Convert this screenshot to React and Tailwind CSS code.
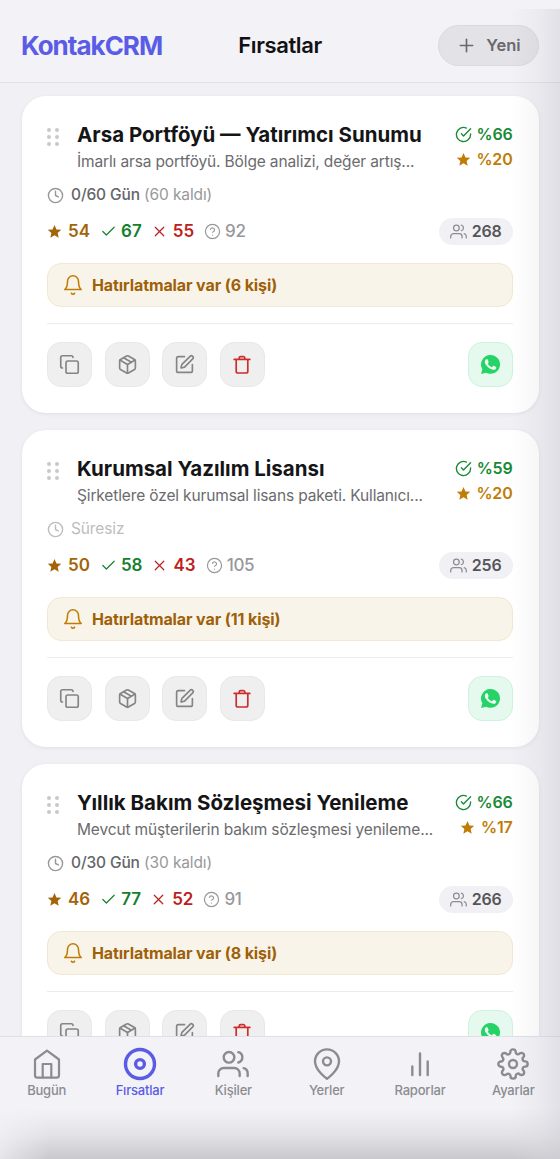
import { clsx } from 'clsx';
import { Check, CircleHelp, Clock, Copy, Plus, SquarePen, X } from 'lucide-react';
import { FiBell, FiCheckCircle, FiMapPin, FiPackage, FiSettings, FiUsers } from 'react-icons/fi';

const deals = [
    {
        title: 'Arsa Portföyü — Yatırımcı Sunumu',
        desc: 'İmarlı arsa portföyü. Bölge analizi, değer artış...',
        days: '0/60 Gün',
        left: '(60 kaldı)',
        success: '%66',
        star: '%20',
        stats: [54, 67, 55, 92],
        people: 268,
        reminders: 6,
    },
    {
        title: 'Kurumsal Yazılım Lisansı',
        desc: 'Şirketlere özel kurumsal lisans paketi. Kullanıcı...',
        success: '%59',
        star: '%20',
        stats: [50, 58, 43, 105],
        people: 256,
        reminders: 11,
    },
    {
        title: 'Yıllık Bakım Sözleşmesi Yenileme',
        desc: 'Mevcut müşterilerin bakım sözleşmesi yenileme...',
        days: '0/30 Gün',
        left: '(30 kaldı)',
        success: '%66',
        star: '%17',
        stats: [46, 77, 52, 91],
        people: 266,
        reminders: 8,
    },
];

function StarIcon({ size }) {
    return (
        <svg width={size} height={size} viewBox="0 0 24 24" fill="currentColor">
            <path d="M12 1.5l3.1 7.1 7.7.7-5.8 5.1 1.7 7.6-6.7-4-6.7 4L7 14.4 1.2 9.3l7.7-.7z" />
        </svg>
    );
}

function TrashIcon() {
    return (
        <svg width="18" height="20" viewBox="0 0 18 20" fill="none" stroke="currentColor" strokeWidth="1.7" strokeLinecap="round" strokeLinejoin="round">
            <path d="M1.2 4.4h15.6M3.2 4.4v11.8a1.8 1.8 0 0 0 1.8 1.8h8a1.8 1.8 0 0 0 1.8-1.8V4.4M6.2 4.2V3a1.400 1.400 0 0 1 1.400-1.400h2.800A1.400 1.400 0 0 1 11.800 3v1.200" />
        </svg>
    );
}

function WhatsappIcon() {
    return (
        <svg width="19" height="19" viewBox="0 0 24 24">
            <path fill="#25d366" d="M12 0a11.900 11.900 0 0 0-10.300 17.900L.1 23.900l6.200-1.600A11.900 11.900 0 1 0 12 0z" />
            <path
                fill="#effcf4"
                transform="translate(-2.300 -2.300) scale(1.190)"
                d="M17.472 14.382c-.297-.149-1.758-.867-2.030-.967-.273-.099-.471-.148-.670.150-.197.297-.767.966-.940 1.164-.173.199-.347.223-.644.075-.297-.150-1.255-.463-2.390-1.475-.883-.788-1.480-1.761-1.653-2.059-.173-.297-.018-.458.130-.606.134-.133.298-.347.446-.520.149-.174.198-.298.298-.497.099-.198.050-.371-.025-.520-.075-.149-.669-1.612-.916-2.207-.242-.579-.487-.500-.669-.510-.173-.008-.371-.010-.570-.010-.198 0-.520.074-.792.372-.272.297-1.040 1.016-1.040 2.479 0 1.462 1.065 2.875 1.213 3.074.149.198 2.096 3.200 5.077 4.487.709.306 1.262.489 1.694.625.712.227 1.360.195 1.871.118.571-.085 1.758-.719 2.006-1.413.248-.694.248-1.289.173-1.413-.074-.124-.272-.198-.570-.347z"
            />
        </svg>
    );
}

function HomeIcon() {
    return (
        <svg width="32" height="32" viewBox="0 0 32 32" fill="none" stroke="currentColor" strokeWidth="2.2" strokeLinecap="round" strokeLinejoin="round">
            <path d="M4 11.500 16 2.600l12 8.900v15.700a2.400 2.400 0 0 1-2.400 2.400H6.400A2.400 2.400 0 0 1 4 27.200z" />
            <path d="M11.700 29.400V16h8.600v13.400" />
        </svg>
    );
}

function TargetIcon() {
    return (
        <svg width="34" height="34" viewBox="0 0 34 34" fill="none" stroke="currentColor" strokeWidth="3.4">
            <circle cx="17" cy="17" r="14.5" />
            <circle cx="17" cy="17" r="4.4" />
        </svg>
    );
}

function BarsIcon() {
    return (
        <svg width="32" height="32" viewBox="0 0 32 32" fill="none" stroke="currentColor" strokeWidth="2.4" strokeLinecap="round">
            <path d="M8.300 18.500v8.500M16 5.500V27M23.700 13.500V27" />
        </svg>
    );
}

function GripDots() {
    return (
        <div className="mt-[6px] grid h-[18px] w-[12px] shrink-0 grid-cols-2 content-between gap-x-[4px]">
            {[0, 1, 2, 3, 4, 5].map((i) => (
                <span key={i} className="size-1 rounded-full bg-[#c9c9cc]" />
            ))}
        </div>
    );
}

function ActionButton({ className, children }) {
    return (
        <button className={clsx('flex size-[45px] items-center justify-center rounded-[14px] border', className || 'border-[#e8e8e9] bg-[#efefef] text-[#858587]')}>
            {children}
        </button>
    );
}

function DealCard({ deal }) {
    const [starred, won, lost, unknown] = deal.stats;

    return (
        <article className="h-[317px] shrink-0 rounded-[24px] bg-white pt-[26px] pr-[26px] pl-[25.5px] shadow-[0_1px_4px_rgba(0,0,0,0.07)]">
            <div className="flex h-[56px]">
                <GripDots />
                <div className="ml-[18px] min-w-0 flex-1 whitespace-nowrap">
                    <h2 className="text-[20.5px] leading-[26px] font-bold text-[#151517]">{deal.title}</h2>
                    <p className="text-[15.5px] leading-[28px] tracking-[-0.14px] text-[#6b6b6e]">{deal.desc}</p>
                </div>
                <div className="flex shrink-0 flex-col items-end text-[16px] leading-[25px] font-semibold tracking-[-0.2px]">
                    <span className="flex items-center gap-[5px] text-[#178a35]">
                        <FiCheckCircle size={17} strokeWidth={1.9} />
                        {deal.success}
                    </span>
                    <span className="flex items-center gap-[6px] text-[#c07c05]">
                        <StarIcon size={15} />
                        {deal.star}
                    </span>
                </div>
            </div>

            <div className={clsx('flex h-[34px] items-center gap-[7px] text-[15.5px] tracking-[-0.13px]', deal.days ? 'text-[#98989b]' : 'text-[#bdbdc0]')}>
                <Clock size={17} strokeWidth={2} />
                {deal.days ? (
                    <span><span className="font-medium text-[#656568]">{deal.days}</span> {deal.left}</span>
                ) : (
                    <span>Süresiz</span>
                )}
            </div>

            <div className="flex h-[38px] items-center text-[17px] font-semibold">
                <div className="flex items-center gap-[6px] pt-px text-[#a46306]"><StarIcon size={15} />{starred}</div>
                <div className="ml-[10px] flex items-center gap-[4px] pt-px text-[#16802e]"><Check size={17} strokeWidth={1.7} />{won}</div>
                <div className="ml-[9px] flex items-center gap-[5px] pt-px text-[#bd2020]"><X size={17} strokeWidth={1.7} />{lost}</div>
                <div className="ml-[10px] flex items-center gap-[4px] pt-px font-medium tracking-[-0.3px] text-[#98989b]"><CircleHelp size={17} strokeWidth={1.7} />{unknown}</div>
                <div className="ml-auto flex h-[27px] items-center gap-[5px] rounded-full bg-[#f1f1f5] px-[11px] text-[16px] tracking-[-0.2px] text-[#555558]">
                    <FiUsers size={17} strokeWidth={1.8} className="text-[#8e8e92]" />
                    {deal.people}
                </div>
            </div>

            <div className="mt-[13px] flex h-[44px] items-center gap-[8px] rounded-[14px] border border-[#f2e7cf] bg-[#f9f4ea] px-[14px] text-[16px] font-bold tracking-[-0.1px] text-[#9e6008]">
                <FiBell size={22} strokeWidth={1.7} className="text-[#c07c05]" />
                Hatırlatmalar var ({deal.reminders} kişi)
            </div>

            <div className="mt-[16px] flex gap-[12.5px] border-t border-[#ececef] pt-[18px]">
                <ActionButton><Copy size={21} strokeWidth={1.9} /></ActionButton>
                <ActionButton><FiPackage size={21} strokeWidth={1.9} /></ActionButton>
                <ActionButton><SquarePen size={21} strokeWidth={1.9} /></ActionButton>
                <ActionButton className="border-[#e8e8e9] bg-[#efefef] text-[#cb2e2e]"><TrashIcon /></ActionButton>
                <ActionButton className="ml-auto border-[#cdf3dc] bg-[#e6f9ee]"><WhatsappIcon /></ActionButton>
            </div>
        </article>
    );
}

const tabs = [
    { label: 'Bugün', icon: <HomeIcon /> },
    { label: 'Fırsatlar', icon: <TargetIcon />, active: true },
    { label: 'Kişiler', icon: <FiUsers size={32} strokeWidth={1.8} /> },
    { label: 'Yerler', icon: <FiMapPin size={32} strokeWidth={1.8} /> },
    { label: 'Raporlar', icon: <BarsIcon /> },
    { label: 'Ayarlar', icon: <FiSettings size={32} strokeWidth={1.8} /> },
];

export default function App() {
    return (
        <div className="relative flex h-[1159px] w-[560px] flex-col overflow-hidden bg-[#f0f0f5] font-['Inter',sans-serif]">
            <header className="grid h-[83px] shrink-0 grid-cols-[1fr_auto_1fr] items-center border-b border-[#e1e1e6] bg-[#f2f2f7] px-[21px] pt-[9px]">
                <div className="text-[26px] font-bold tracking-[-1px] text-[#5b5ce6]">KontakCRM</div>
                <h1 className="text-[22px] font-semibold tracking-[-0.4px] text-[#111113]">Fırsatlar</h1>
                <button className="flex h-[41px] w-[101px] items-center justify-center gap-[9px] justify-self-end rounded-full border border-[#dadade] bg-[#e3e3e7] text-[16.5px] font-semibold text-[#69696c]">
                    <Plus size={21} strokeWidth={1.9} />
                    Yeni
                </button>
            </header>

            <main className="flex min-h-0 flex-1 flex-col gap-[17px] overflow-hidden px-[21.5px] pt-[13px]">
                {deals.map((deal) => <DealCard key={deal.title} deal={deal} />)}
            </main>

            <nav className="grid h-[123px] shrink-0 grid-cols-6 border-t border-[#e0e0e5] bg-[#f2f2f7] pt-[9px]">
                {tabs.map((tab) => (
                    <button key={tab.label} className={clsx('flex h-[55px] flex-col items-center text-[13px] font-medium tracking-[-0.2px]', tab.active ? 'text-[#5b5ce6]' : 'text-[#8c8c90]')}>
                        <span className="flex h-[35px] items-center">{tab.icon}</span>
                        <span className="leading-[19px]">{tab.label}</span>
                    </button>
                ))}
            </nav>

            {/* shade along the right and bottom edges */}
            <div className="pointer-events-none absolute top-[9px] right-0 bottom-0 w-[50px] bg-linear-to-r from-transparent via-[#505060]/5 via-60% to-[#505060]/11" />
            <div className="pointer-events-none absolute inset-x-0 bottom-0 h-[50px] bg-linear-to-b from-transparent via-black/6 via-50% to-black/17 [mask-image:linear-gradient(to_right,rgb(0_0_0/0.3),black_50px,black_510px,rgb(0_0_0/0.5))]" />
        </div>
    );
}
